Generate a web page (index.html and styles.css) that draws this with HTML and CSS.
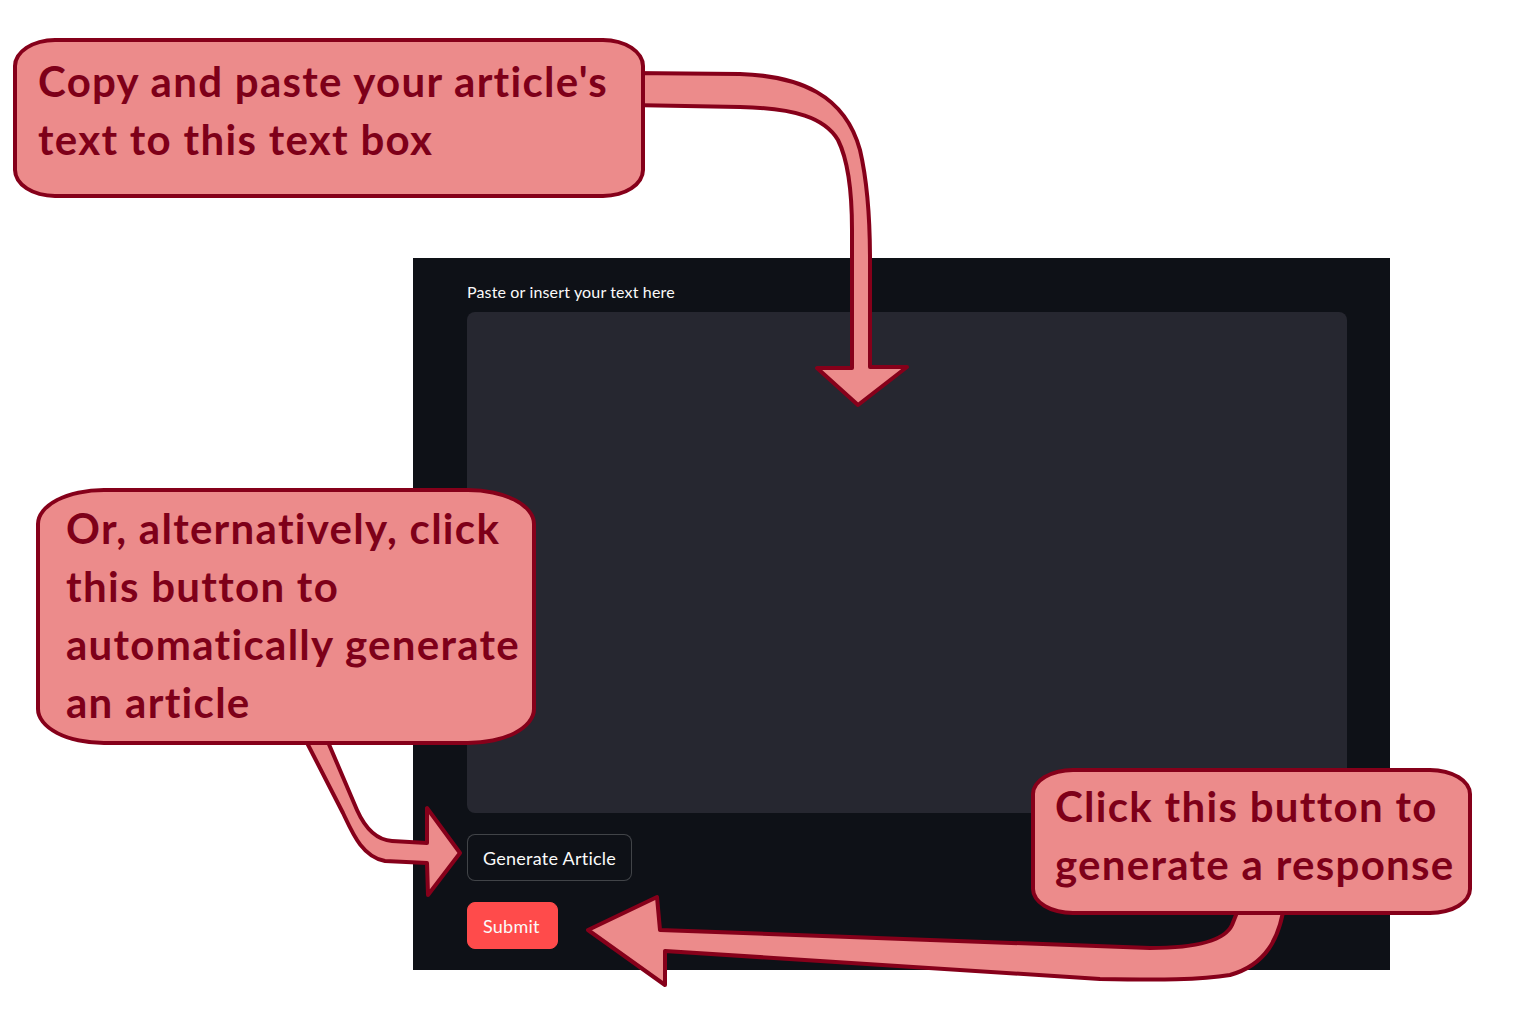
FILE: index.html
```html
<!DOCTYPE html>
<html lang="en">
<head>
<meta charset="utf-8">
<title>Article input guide</title>
<link rel="stylesheet" href="styles.css">
</head>
<body>
<main class="panel">
  <label class="field-label" for="article">Paste or insert your text here</label>
  <textarea id="article" class="field-input"></textarea>
  <button class="btn btn-secondary" type="button">Generate Article</button>
  <button class="btn btn-primary" type="button">Submit</button>
</main>

<svg class="arrows" width="1525" height="1029" viewBox="0 0 1525 1029" aria-hidden="true">
  <path class="arrow" d="M630 73 L740 74 C800 76 845 95 860 150 C867 180 870 220 870 260 L870 367 L907 367 L858 405 L817 368 L852 368 L852 230 C852 190 848 160 838 140 C825 118 795 108 740 107 L630 105 Z"/>
  <path class="arrow" d="M303 735 L343 813 C352 832 362 857 385 861 L427 863 L428 895 L460 853 L427 808 L427 843 L392 841 C377 840 366 830 357 810 L325 735 Z"/>
  <path class="arrow" d="M1285 900 C1280 940 1265 965 1230 975 C1200 980 1160 980 1100 979 L665 951 L665 985 L588 930 L657 897 L660 930 L1150 948 C1200 948 1225 940 1232 925 L1242 900 Z"/>
</svg>

<div class="callout callout-top">Copy and paste your article's<br>text to this text box</div>
<div class="callout callout-left">Or, alternatively, click<br>this button to<br>automatically generate<br>an article</div>
<div class="callout callout-right">Click this button to<br>generate a response</div>
</body>
</html>
```

FILE: styles.css
```css
html, body {
  margin: 0;
  padding: 0;
  background: #ffffff;
}

body {
  width: 1525px;
  height: 1029px;
  position: relative;
  overflow: hidden;
  font-family: "Lato", "Open Sans", sans-serif;
}

.panel {
  box-sizing: border-box;
  margin: 258px 0 0 413px;
  width: 977px;
  height: 712px;
  padding: 24px 43px 0 54px;
  background: #0e1117;
  display: flex;
  flex-direction: column;
  align-items: flex-start;
}

.field-label {
  font-size: 16px;
  line-height: 20px;
  color: #fafafa;
  letter-spacing: 0.15px;
}

.field-input {
  box-sizing: border-box;
  margin-top: 10px;
  width: 880px;
  height: 501px;
  background: #262730;
  border: none;
  border-radius: 8px;
  resize: none;
  outline: none;
  padding: 0;
}

.btn {
  box-sizing: border-box;
  height: 47px;
  padding: 0 15px;
  border-radius: 8px;
  font-family: "Lato", "Open Sans", sans-serif;
  font-size: 18px;
  letter-spacing: 0.25px;
  color: #fafafa;
  cursor: pointer;
}

.btn-secondary {
  margin-top: 21px;
  background: #0e1117;
  border: 1px solid rgba(250, 250, 250, 0.22);
}

.btn-primary {
  margin-top: 21px;
  padding: 0 17px 0 15px;
  background: #ff4b4b;
  border: 1px solid #ff4b4b;
}

.arrows {
  position: absolute;
  left: 0;
  top: 0;
}

.arrow {
  fill: #ec8b8b;
  stroke: #86001a;
  stroke-width: 4;
  stroke-linejoin: round;
}

.callout {
  position: absolute;
  box-sizing: border-box;
  background: #ec8b8b;
  border: 4px solid #86001a;
  color: #7e0019;
  font-family: "Lato", "Open Sans", sans-serif;
  font-weight: 700;
  font-size: 42px;
  letter-spacing: 1.3px;
  line-height: 58px;
  white-space: nowrap;
}

.callout-top {
  left: 13px;
  top: 38px;
  width: 632px;
  height: 160px;
  padding: 10px 0 0 21px;
  border-radius: 42px / 28px;
}

.callout-left {
  left: 36px;
  top: 488px;
  width: 500px;
  height: 257px;
  padding: 7px 0 0 26px;
  border-radius: 68px / 36px;
}

.callout-right {
  left: 1031px;
  top: 768px;
  width: 441px;
  height: 147px;
  padding: 5px 0 0 20px;
  border-radius: 42px / 26px;
}
```
